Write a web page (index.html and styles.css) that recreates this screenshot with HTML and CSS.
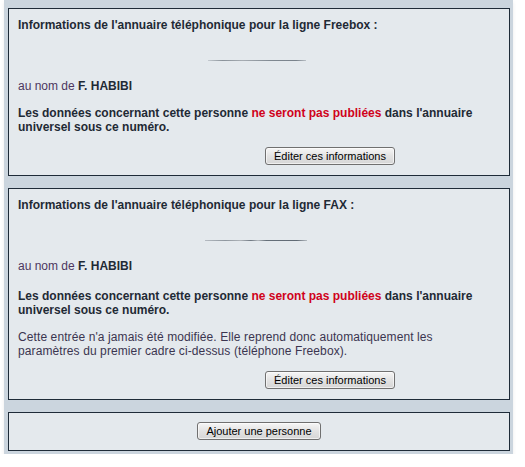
FILE: index.html
```html
<!DOCTYPE html>
<html lang="fr">
<head>
<meta charset="utf-8">
<title>Annuaire</title>
<link rel="stylesheet" href="styles.css">
</head>
<body>
<div class="frame">
  <div class="box">
    <p class="title">Informations de l'annuaire téléphonique pour la ligne Freebox :</p>
    <div class="phone phone-a"></div>
    <p class="owner">au nom de <b>F. HABIBI</b></p>
    <p class="notice">Les données concernant cette personne <span class="red">ne seront pas publiées</span> dans l'annuaire universel sous ce numéro.</p>
    <div class="actions"><button class="btn">Éditer ces informations</button></div>
  </div>
  <div class="box">
    <p class="title">Informations de l'annuaire téléphonique pour la ligne FAX :</p>
    <div class="phone phone-b"></div>
    <p class="owner">au nom de <b>F. HABIBI</b></p>
    <p class="notice notice-b">Les données concernant cette personne <span class="red">ne seront pas publiées</span> dans l'annuaire universel sous ce numéro.</p>
    <p class="info">Cette entrée n'a jamais été modifiée. Elle reprend donc automatiquement les paramètres du premier cadre ci-dessus (téléphone Freebox).</p>
    <div class="actions"><button class="btn">Éditer ces informations</button></div>
  </div>
  <div class="box box-add">
    <button class="btn">Ajouter une personne</button>
  </div>
</div>
</body>
</html>
```

FILE: styles.css
```css
html, body {
  margin: 0;
  padding: 0;
  background: #ffffff;
}
body {
  font-family: "Liberation Sans", Arial, sans-serif;
  font-size: 12px;
  line-height: 14px;
  color: #1f2a35;
}
.frame {
  margin-left: 4px;
  width: 502px;
  padding: 8px 3px 3px 4px;
  background: #cbd5de;
  display: flex;
  flex-direction: column;
  gap: 12px;
  box-shadow: 0 2px 4px rgba(0, 0, 0, 0.08);
}
.box {
  border: 1px solid #1e2b38;
  background: #e4e9ed;
  padding: 9px 9px 10px 9px;
}
.box p {
  margin: 0;
}
.title {
  font-weight: bold;
}
.phone {
  height: 1px;
  margin-top: 28px;
}
.phone-a {
  margin-left: 190px;
  width: 98px;
  background: linear-gradient(90deg, rgba(120,128,138,0.3), #8a929a 15%, #a7adb3 35%, #7f8891 65%, #7a838c 90%, rgba(120,128,138,0.4));
}
.phone-b {
  margin-left: 187px;
  width: 102px;
  background: linear-gradient(90deg, rgba(110,118,128,0.4), #8f979f 20%, #b0b5ba 35%, #6f7882 45%, #b4b9be 52%, #66707a 60%, #606a74 90%, rgba(110,118,128,0.4));
}
.owner {
  margin-top: 18px !important;
  color: #4c3660;
}
.owner b {
  color: #1f2a35;
}
.notice {
  margin-top: 13px !important;
  font-weight: bold;
}
.notice-b {
  margin-top: 16px !important;
}
.red {
  color: #d0021b;
}
.info {
  margin-top: 13px !important;
  margin-right: 30px !important;
  color: #3b3550;
  letter-spacing: 0.1px;
}
.actions {
  margin-top: 13px;
  padding-left: 247px;
}
.box-add {
  display: flex;
  justify-content: center;
  padding-left: 0;
  padding-right: 0;
}
.btn {
  font-family: "Liberation Sans", Arial, sans-serif;
  font-size: 11px;
  line-height: 14px;
  height: 18px;
  padding: 0 8px;
  margin: 0;
  color: #000000;
  border: 1px solid #707070;
  border-radius: 3px;
  background: linear-gradient(#f6f6f6, #e3e3e3 50%, #d6d6d6);
  box-shadow: inset 0 0 0 1px rgba(255, 255, 255, 0.6);
}
```
